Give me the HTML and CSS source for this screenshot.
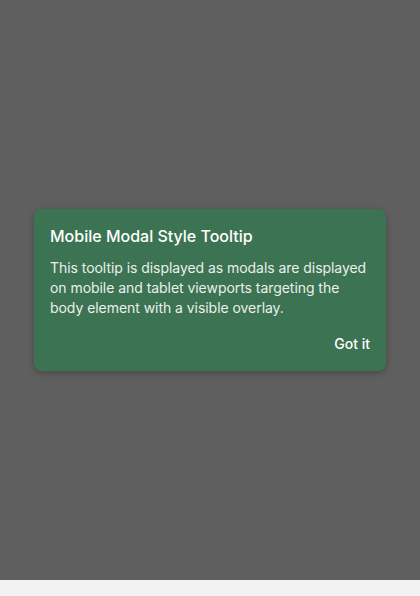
FILE: index.html
```html
<!DOCTYPE html>
<html lang="en">
<head>
<meta charset="utf-8">
<title>Mobile Modal Style Tooltip</title>
<link rel="stylesheet" href="styles.css">
</head>
<body>
<div class="overlay">
  <div class="tooltip" role="dialog" aria-labelledby="tt-title">
    <h2 class="tooltip-title" id="tt-title">Mobile Modal Style Tooltip</h2>
    <p class="tooltip-body">This tooltip is displayed as modals are displayed on mobile and tablet viewports targeting the body element with a visible overlay.</p>
    <div class="tooltip-actions">
      <button class="tooltip-btn" type="button">Got it</button>
    </div>
  </div>
</div>
</body>
</html>
```
FILE: styles.css
```css
html, body {
  margin: 0;
  padding: 0;
}
body {
  background: #f2f2f2;
  font-family: Inter, Roboto, "Liberation Sans", sans-serif;
  height: 596px;
}
.overlay {
  height: 580px;
  background: #5f5f5f;
  display: flex;
  align-items: center;
  padding: 0 34px;
}
.tooltip {
  flex: 1;
  background: #3c7352;
  border-radius: 8px;
  padding: 17px 16px 17px;
  box-shadow: 0 2px 6px rgba(0,0,0,0.25);
  color: #ffffff;
}
.tooltip-title {
  margin: 0;
  font-size: 16px;
  line-height: 20px;
  font-weight: 500;
}
.tooltip-body {
  margin: 12px 0 0;
  font-size: 14px;
  line-height: 20px;
  letter-spacing: -0.05px;
  color: #eaf0ec;
}
.tooltip-actions {
  display: flex;
  justify-content: flex-end;
  margin-top: 16px;
}
.tooltip-btn {
  background: none;
  border: 0;
  padding: 0;
  font-family: inherit;
  font-size: 14px;
  line-height: 20px;
  font-weight: 500;
  color: #ffffff;
}
```
